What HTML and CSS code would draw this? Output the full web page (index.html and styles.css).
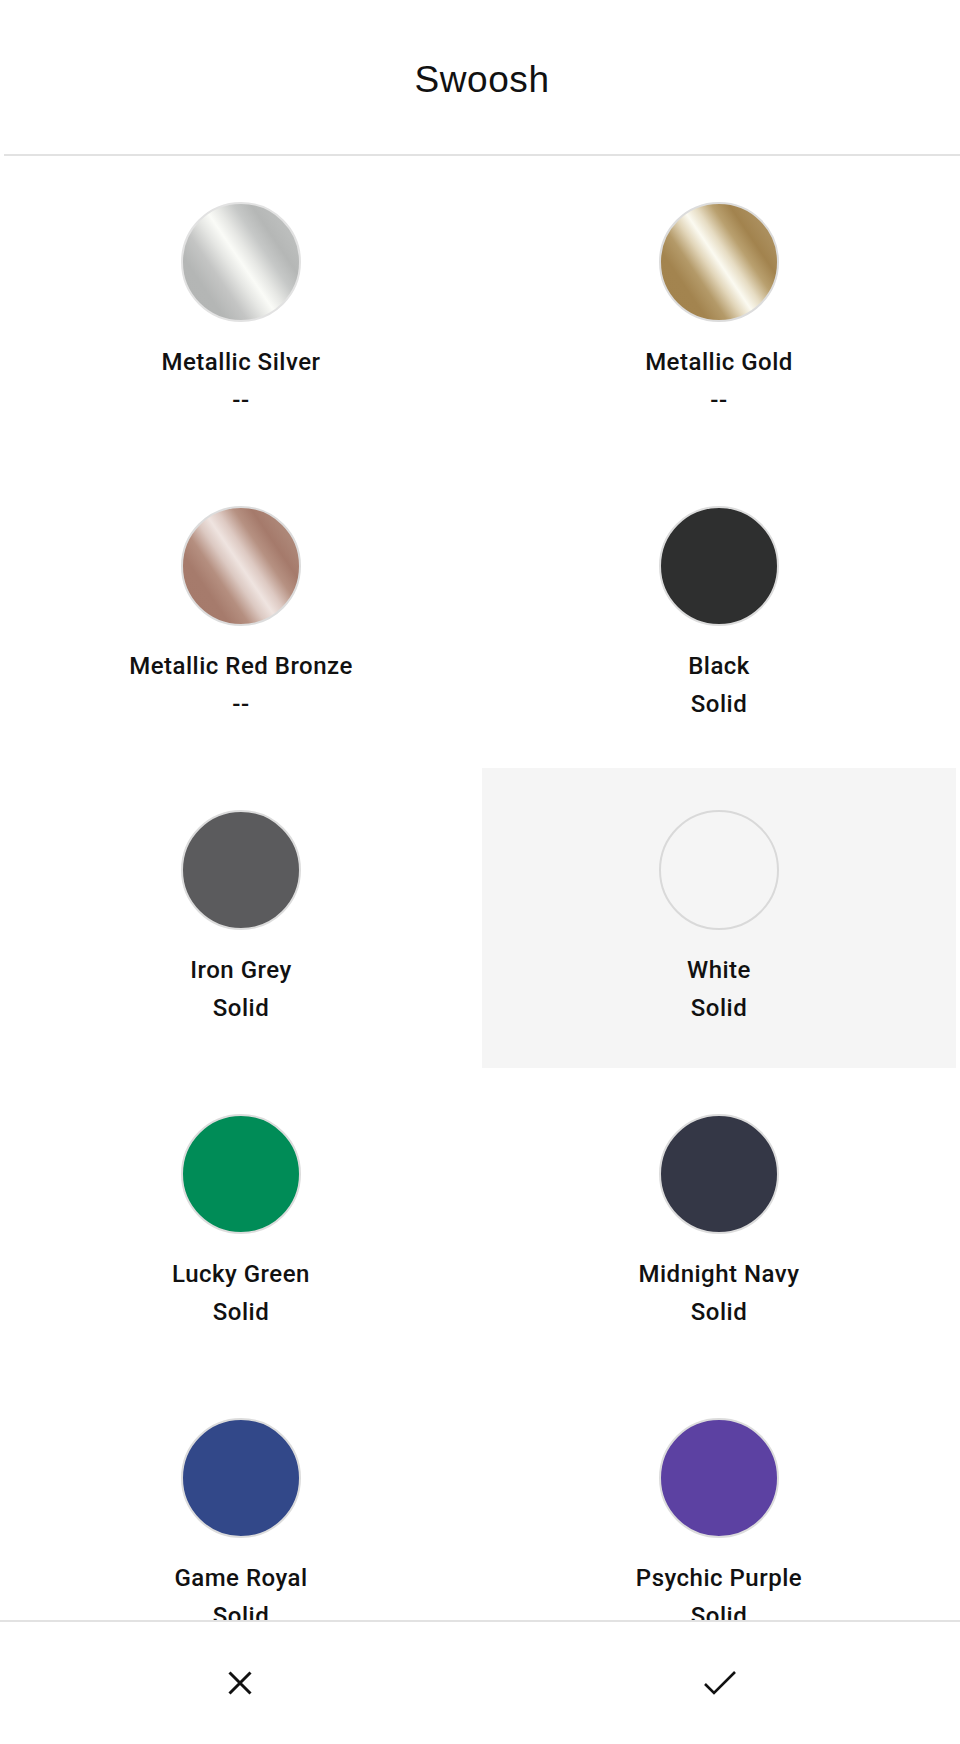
FILE: index.html
```html
<!DOCTYPE html>
<html lang="en">
<head>
<meta charset="utf-8">
<title>Swoosh</title>
<link rel="stylesheet" href="styles.css">
</head>
<body>
<header class="header">
  <h1 class="title">Swoosh</h1>
</header>
<main class="grid">
  <div class="cell">
    <span class="swatch swatch-silver"></span>
    <span class="name">Metallic Silver</span>
    <span class="finish">--</span>
  </div>
  <div class="cell">
    <span class="swatch swatch-gold"></span>
    <span class="name">Metallic Gold</span>
    <span class="finish">--</span>
  </div>
  <div class="cell">
    <span class="swatch swatch-bronze"></span>
    <span class="name">Metallic Red Bronze</span>
    <span class="finish">--</span>
  </div>
  <div class="cell">
    <span class="swatch swatch-black"></span>
    <span class="name">Black</span>
    <span class="finish">Solid</span>
  </div>
  <div class="cell">
    <span class="swatch swatch-iron"></span>
    <span class="name">Iron Grey</span>
    <span class="finish">Solid</span>
  </div>
  <div class="cell cell-selected">
    <span class="swatch swatch-white"></span>
    <span class="name">White</span>
    <span class="finish">Solid</span>
  </div>
  <div class="cell">
    <span class="swatch swatch-green"></span>
    <span class="name">Lucky Green</span>
    <span class="finish">Solid</span>
  </div>
  <div class="cell">
    <span class="swatch swatch-navy"></span>
    <span class="name">Midnight Navy</span>
    <span class="finish">Solid</span>
  </div>
  <div class="cell">
    <span class="swatch swatch-royal"></span>
    <span class="name">Game Royal</span>
    <span class="finish">Solid</span>
  </div>
  <div class="cell">
    <span class="swatch swatch-purple"></span>
    <span class="name">Psychic Purple</span>
    <span class="finish">Solid</span>
  </div>
</main>
<footer class="footer">
  <button class="action" type="button" aria-label="Cancel">
    <svg class="icon-x" width="26" height="26" viewBox="0 0 26 26" fill="none" stroke="#111" stroke-width="3">
      <path d="M2.5 2.5 L23.5 23.5 M23.5 2.5 L2.5 23.5"/>
    </svg>
  </button>
  <button class="action" type="button" aria-label="Confirm">
    <svg class="icon-check" width="34" height="26" viewBox="0 0 34 26" fill="none" stroke="#111" stroke-width="2.6" stroke-linejoin="miter">
      <path d="M2 14 L11 23 L32 2"/>
    </svg>
  </button>
</footer>
</body>
</html>
```

FILE: styles.css
```css
* {
  box-sizing: border-box;
}

html, body {
  margin: 0;
  padding: 0;
  background: #ffffff;
}

body {
  font-family: "Liberation Sans", Arial, sans-serif;
  color: #111111;
}

.header {
  height: 156px;
  margin-left: 4px;
  padding-top: 6px;
  border-bottom: 2px solid #e2e2e2;
  display: flex;
  align-items: center;
  justify-content: center;
}

.title {
  margin: 0;
  font-family: "Liberation Sans", Arial, sans-serif;
  font-weight: 400;
  font-size: 37px;
  line-height: 44px;
  color: #111111;
  letter-spacing: 0.6px;
}

.grid {
  display: grid;
  grid-template-columns: 1fr 1fr;
  grid-auto-rows: 300px;
  gap: 4px;
  padding: 4px 4px 130px 4px;
}

.cell {
  display: flex;
  flex-direction: column;
  align-items: center;
  padding-top: 42px;
}

.cell-selected {
  background: #f5f5f5;
}

.swatch {
  display: block;
  width: 120px;
  height: 120px;
  border-radius: 50%;
  border: 2px solid #dcdcdc;
  margin-bottom: 21px;
}

.name,
.finish {
  display: block;
  font-family: Roboto, "Liberation Sans", Arial, sans-serif;
  font-weight: 500;
  font-size: 24px;
  line-height: 38px;
  letter-spacing: 0.5px;
  color: #111111;
  text-align: center;
}

.swatch-silver {
  border-color: #e2e2e2;
  background: linear-gradient(56deg, #b3b5b4 0%, #b4b6b5 22%, #c4c5c4 33%, #e6e7e4 43%, #fafbf7 50%, #e6e7e4 57%, #c6c8c7 66%, #b5b7b6 75%, #bcbebd 85%, #b4b6b5 100%);
}

.swatch-gold {
  background: linear-gradient(56deg, #a2834e 0%, #a3844f 24%, #b49a69 34%, #e2d6ba 43%, #fbfaf1 50%, #e6dcc3 57%, #b9a06f 66%, #a2834e 75%, #ab8f5e 85%, #a2834e 100%);
}

.swatch-bronze {
  background: linear-gradient(56deg, #a57a6b 0%, #a67b6c 24%, #b58f80 34%, #dcc9c2 43%, #efe4e0 50%, #ddc9c2 57%, #b69182 66%, #a57a6b 75%, #ad8778 85%, #a57a6b 100%);
}

.swatch-black {
  background: #2e2f2f;
}

.swatch-iron {
  background: #5b5b5d;
}

.swatch-white {
  background: transparent;
  border-color: #d9d9d9;
}

.swatch-green {
  background: #008c57;
}

.swatch-navy {
  background: #343746;
}

.swatch-royal {
  background: #324889;
}

.swatch-purple {
  background: #5c41a2;
}

.footer {
  position: fixed;
  left: 0;
  right: 0;
  bottom: 0;
  height: 124px;
  background: #ffffff;
  border-top: 2px solid #e2e2e2;
  display: flex;
}

.action {
  flex: 1;
  display: flex;
  align-items: center;
  justify-content: center;
  background: transparent;
  border: 0;
  padding: 0;
  margin: 0;
}

.icon-x,
.icon-check {
  display: block;
}
```
